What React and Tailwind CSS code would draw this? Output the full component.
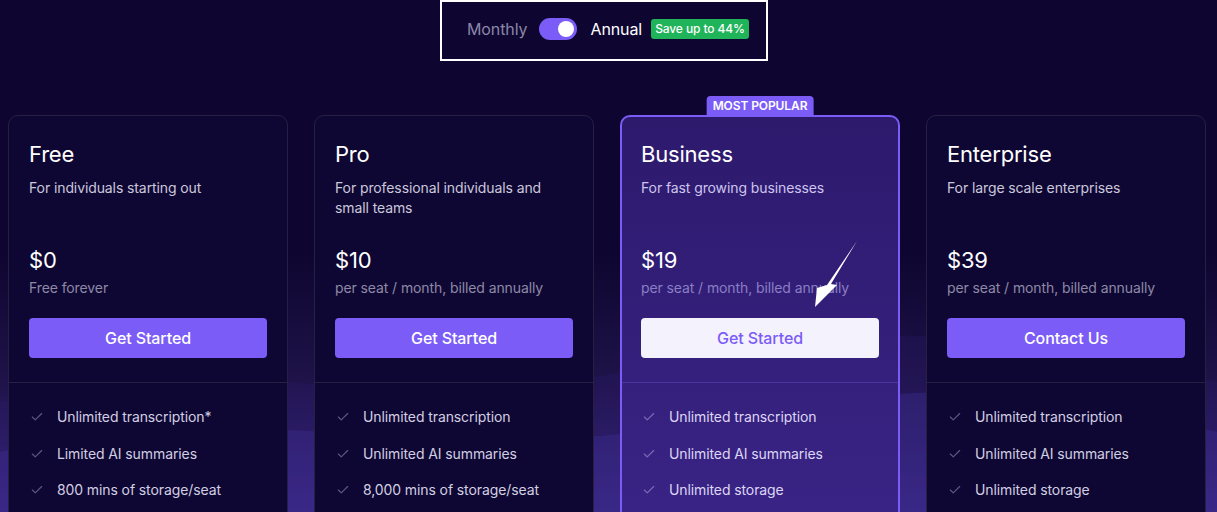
import React from "react";

const plans = [
  {
    name: "Free",
    desc: "For individuals starting out",
    price: "$0",
    sub: "Free forever",
    cta: "Get Started",
    features: ["Unlimited transcription*", "Limited AI summaries", "800 mins of storage/seat"],
  },
  {
    name: "Pro",
    desc: "For professional individuals and small teams",
    price: "$10",
    sub: "per seat / month, billed annually",
    cta: "Get Started",
    features: ["Unlimited transcription", "Unlimited AI summaries", "8,000 mins of storage/seat"],
  },
  {
    name: "Business",
    desc: "For fast growing businesses",
    price: "$19",
    sub: "per seat / month, billed annually",
    cta: "Get Started",
    featured: true,
    features: ["Unlimited transcription", "Unlimited AI summaries", "Unlimited storage"],
  },
  {
    name: "Enterprise",
    desc: "For large scale enterprises",
    price: "$39",
    sub: "per seat / month, billed annually",
    cta: "Contact Us",
    features: ["Unlimited transcription", "Unlimited AI summaries", "Unlimited storage"],
  },
];

function Check({ className }) {
  return (
    <svg width="14" height="14" viewBox="0 0 24 24" fill="none" stroke="currentColor" strokeWidth="2" strokeLinecap="round" strokeLinejoin="round" className={className}>
      <path d="M20 6 9 17l-5-5" />
    </svg>
  );
}

function Card({ plan }) {
  const f = plan.featured;
  return (
    <div
      className={
        "relative w-[280px] h-[460px] rounded-[10px] shrink-0 " +
        (f
          ? "border-2 border-[#7b5cf6] bg-gradient-to-b from-[#2d1a6d] to-[#3b2589]"
          : "border border-[#262042] bg-[#0f0733]")
      }
    >
      {f && (
        <div className="absolute left-1/2 -translate-x-1/2 top-[-21px] h-[19px] px-[6px] rounded-t-[4px] bg-[#7b5cf6] text-white text-[12px] font-semibold leading-[19px] tracking-[-0.1px]">
          MOST POPULAR
        </div>
      )}
      <div className={f ? "px-[19px] pt-[23px]" : "px-[20px] pt-[24px]"}>
        <div className="text-[22px] leading-[28px] font-normal text-white tracking-[-0.2px]">{plan.name}</div>
        <div className={"mt-[10px] h-[40px] text-[14px] leading-[20px] tracking-[-0.1px] " + (f ? "text-[#cdc5ee]" : "text-[#cbc8dc]")}>
          {plan.desc}
        </div>
        <div className="mt-[28px] text-[22px] leading-[28px] font-normal text-white tracking-[-0.2px]">{plan.price}</div>
        <div className={"mt-[4px] text-[14px] leading-[20px] tracking-[-0.1px] " + (f ? "text-[#8a7ec4]" : "text-[#8d89a6]")}>
          {plan.sub}
        </div>
        <button
          className={
            "mt-[20px] w-[238px] h-[40px] rounded-[4px] text-[16px] font-medium tracking-[-0.1px] " +
            (f ? "bg-[#f4f2fd] text-[#7b5cf6]" : "bg-[#7b5cf6] text-white")
          }
        >
          {plan.cta}
        </button>
      </div>
      <div className={"mt-[24px] h-px " + (f ? "bg-[#4a36a0]" : "bg-[#262042]")} />
      <div className={"flex flex-col gap-[16.5px] pt-[24px] " + (f ? "px-[19px]" : "px-[20px]")}>
        {plan.features.map((t) => (
          <div key={t} className="flex items-center h-[20px]">
            <Check className={"ml-[1px] mr-[13px] " + (f ? "text-[#7a6bb8]" : "text-[#5d5880]")} />
            <span className={"text-[14px] leading-[20px] tracking-[-0.1px] " + (f ? "text-[#ddd6f4]" : "text-[#d2cfe2]")}>{t}</span>
          </div>
        ))}
      </div>
      {f && (
        <svg className="absolute left-[178px] top-[118px]" width="70" height="80" viewBox="0 0 70 80">
          <polygon points="57,6 31,49 37,50 15,72 17,53 27,50" fill="white" />
        </svg>
      )}
    </div>
  );
}

export default function App() {
  return (
    <div
      className="relative w-[1217px] h-[512px] overflow-hidden bg-[#0e0630]"
      style={{ fontFamily: "Inter, 'Noto Sans', sans-serif" }}
    >
      <div className="absolute inset-x-0 bottom-0 h-[260px] bg-gradient-to-b from-[#0e0630] via-[#1f1349] to-[#3d2a8b]" />
      <svg className="absolute left-0 bottom-0" width="1217" height="230" viewBox="0 0 1217 230" preserveAspectRatio="none">
        <path d="M0 120 C 200 60, 400 140, 620 90 S 1000 40, 1217 100 L1217 230 L0 230 Z" fill="#2c1c6a" opacity="0.3" />
        <path d="M0 170 C 250 110, 450 190, 700 140 S 1050 110, 1217 150 L1217 230 L0 230 Z" fill="#3f2c92" opacity="0.4" />
      </svg>
      <div className="relative flex pl-[440px]">
        <div className="w-[328px] h-[61px] border-2 border-white flex items-center pl-[25px] pb-[3px]">
          <span className="text-[16px] text-[#8b87a8] tracking-[-0.1px]">Monthly</span>
          <div className="ml-[12px] w-[38px] h-[22px] rounded-full bg-[#7b5cf6] flex items-center justify-end pr-[3px]">
            <div className="w-[16px] h-[16px] rounded-full bg-white" />
          </div>
          <span className="ml-[13px] text-[16px] text-white tracking-[-0.1px]">Annual</span>
          <span className="ml-[9px] h-[20px] px-[4px] rounded-[3px] bg-[#1fb35a] text-white text-[12px] font-medium leading-[20px] tracking-[-0.1px]">
            Save up to 44%
          </span>
        </div>
      </div>
      <div className="relative flex gap-[26px] pl-[8px] mt-[54px]">
        {plans.map((p) => (
          <Card key={p.name} plan={p} />
        ))}
      </div>
    </div>
  );
}
